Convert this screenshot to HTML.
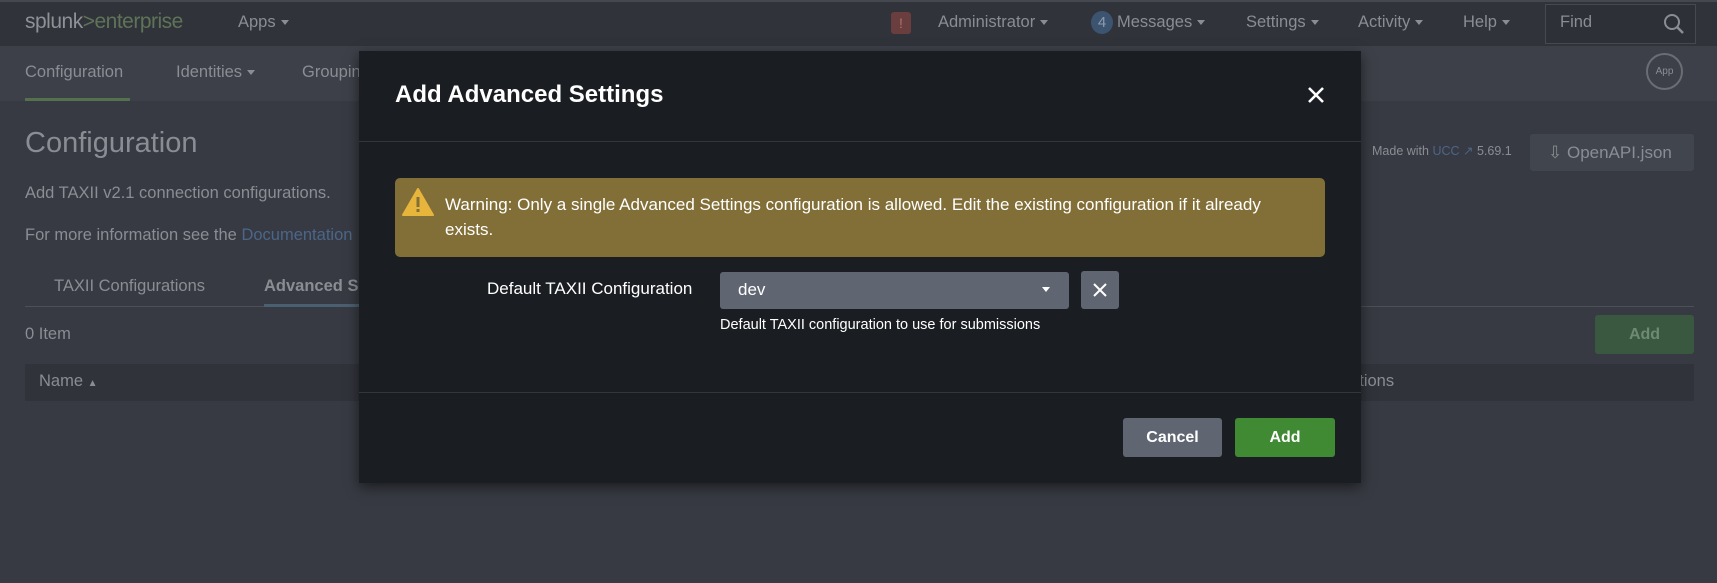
<!DOCTYPE html>
<html><head><meta charset="utf-8"><style>
*{margin:0;padding:0;box-sizing:border-box}
body{width:1717px;height:583px;overflow:hidden;background:#373a42;font-family:"Liberation Sans",sans-serif;color:#8a8d93;position:relative}
.a{position:absolute;white-space:nowrap}
.top{left:0;top:0;width:1717px;height:46px;background:#30333a;border-top:2px solid #45484e}
.sub{left:0;top:46px;width:1717px;height:55px;background:#3d4048}
.f16{font-size:16.5px}
.caret{display:inline-block;width:0;height:0;border-left:4px solid transparent;border-right:4px solid transparent;border-top:5px solid #8a8d93;margin-left:5px;vertical-align:middle}
.modal{left:359px;top:51px;width:1002px;height:432px;background:#1a1d21;box-shadow:0 4px 12px rgba(0,0,0,.5)}
.w{color:#fff}
</style></head><body>
<div class="a top"></div>
<div class="a" style="left:25px;top:10px;font-size:21px;letter-spacing:-0.5px;color:#8e9196">splunk<span style="color:#5f7358">&gt;enterprise</span></div>
<div class="a f16" style="left:238px;top:13px">Apps<span class="caret"></span></div>
<div class="a" style="left:891px;top:12px;width:20px;height:22px;background:#6a3e3e;border-radius:3px;font-size:14px;text-align:center;line-height:22px;color:#b07070">!</div>
<div class="a f16" style="left:938px;top:13px">Administrator<span class="caret"></span></div>
<div class="a" style="left:1091px;top:11px;width:22px;height:23px;border-radius:50%;background:#3d5470;color:#8a9bb0;font-size:15px;text-align:center;line-height:23px">4</div>
<div class="a f16" style="left:1117px;top:13px">Messages<span class="caret"></span></div>
<div class="a f16" style="left:1246px;top:13px">Settings<span class="caret"></span></div>
<div class="a f16" style="left:1358px;top:13px">Activity<span class="caret"></span></div>
<div class="a f16" style="left:1463px;top:13px">Help<span class="caret"></span></div>
<div class="a" style="left:1545px;top:4px;width:151px;height:40px;border:1px solid #46494f;background:#2d3036"></div>
<div class="a f16" style="left:1560px;top:13px">Find</div>
<svg class="a" style="left:1663px;top:13px" width="22" height="22" viewBox="0 0 22 22"><circle cx="9" cy="9" r="7" fill="none" stroke="#8a8d93" stroke-width="2"/><path d="M14 14l6 6" stroke="#8a8d93" stroke-width="2.5"/></svg>
<div class="a sub"></div>
<div class="a f16" style="left:25px;top:63px">Configuration</div>
<div class="a" style="left:25px;top:98px;width:105px;height:3px;background:#55704f"></div>
<div class="a f16" style="left:176px;top:63px">Identities<span class="caret"></span></div>
<div class="a f16" style="left:302px;top:63px">Grouping</div>
<div class="a" style="left:1646px;top:53px;width:37px;height:37px;border:2px solid #6a6d73;border-radius:50%;font-size:10px;text-align:center;line-height:33px">App</div>
<div class="a" style="left:25px;top:127px;font-size:29px">Configuration</div>
<div class="a f16" style="left:25px;top:184px">Add TAXII v2.1 connection configurations.</div>
<div class="a f16" style="left:25px;top:226px">For more information see the <span style="color:#4b6688">Documentation</span></div>
<div class="a f16" style="left:54px;top:277px">TAXII Configurations</div>
<div class="a f16" style="left:264px;top:277px;font-weight:bold">Advanced Settings</div>
<div class="a" style="left:25px;top:306px;width:1669px;height:1px;background:#4d5057"></div>
<div class="a" style="left:264px;top:304px;width:120px;height:3px;background:#4a5f6f"></div>
<div class="a f16" style="left:25px;top:325px">0 Item</div>
<div class="a" style="left:25px;top:364px;width:1669px;height:37px;background:#30333a"></div>
<div class="a f16" style="left:39px;top:372px">Name <span style="font-size:10px">▲</span></div>
<div class="a f16" style="left:1340px;top:372px">Actions</div>
<div class="a" style="left:1595px;top:315px;width:99px;height:39px;background:#3a5840;border-radius:3px;color:#6f8a72;font-size:16px;text-align:center;line-height:39px;font-weight:bold">Add</div>
<div class="a" style="left:1372px;top:143px;font-size:12.5px">Made with <span style="color:#4b6688">UCC ↗</span> 5.69.1</div>
<div class="a" style="left:1530px;top:134px;width:164px;height:37px;background:#41454d;border-radius:3px;font-size:17px;line-height:37px;padding-left:18px">⇩ OpenAPI.json</div>

<div class="a modal"></div>
<div class="a w" style="left:395px;top:81px;font-size:24px;font-weight:bold">Add Advanced Settings</div>
<svg class="a" style="left:1307px;top:86px" width="18" height="18" viewBox="0 0 18 18"><path d="M2 2L16 16M16 2L2 16" stroke="#fff" stroke-width="2.6"/></svg>
<div class="a" style="left:359px;top:141px;width:1002px;height:1px;background:#33373c"></div>
<div class="a" style="left:395px;top:178px;width:930px;height:79px;background:#826f38;border-radius:5px"></div>
<svg class="a" style="left:402px;top:188px" width="32" height="28" viewBox="0 0 32 28"><path d="M16 1L31 27H1Z" fill="#e7b53c" stroke="#e7b53c" stroke-linejoin="round" stroke-width="2"/><rect x="14.5" y="9" width="3" height="10" fill="#826f38"/><rect x="14.5" y="21" width="3" height="3" fill="#826f38"/></svg>
<div class="a w" style="left:445px;top:192px;font-size:17px;line-height:25px">Warning: Only a single Advanced Settings configuration is allowed. Edit the existing configuration if it already<br>exists.</div>
<div class="a w" style="left:487px;top:279px;font-size:17px">Default TAXII Configuration</div>
<div class="a" style="left:720px;top:272px;width:349px;height:37px;background:#5f6672;border-radius:3px;color:#fff;font-size:17px;line-height:35px;padding-left:18px">dev</div>
<div class="a" style="left:1042px;top:287px;border-left:4px solid transparent;border-right:4px solid transparent;border-top:5px solid #fff"></div>
<div class="a" style="left:1081px;top:271px;width:38px;height:38px;background:#5f6672;border-radius:3px"></div>
<svg class="a" style="left:1093px;top:283px" width="14" height="14" viewBox="0 0 14 14"><path d="M1 1L13 13M13 1L1 13" stroke="#fff" stroke-width="2"/></svg>
<div class="a w" style="left:720px;top:317px;font-size:14.5px">Default TAXII configuration to use for submissions</div>
<div class="a" style="left:359px;top:392px;width:1002px;height:1px;background:#33373c"></div>
<div class="a w" style="left:1123px;top:418px;width:99px;height:39px;background:#5f6672;border-radius:3px;font-size:16px;font-weight:bold;text-align:center;line-height:39px">Cancel</div>
<div class="a w" style="left:1235px;top:418px;width:100px;height:39px;background:#3f8a32;border-radius:3px;font-size:16px;font-weight:bold;text-align:center;line-height:39px">Add</div>
</body></html>
